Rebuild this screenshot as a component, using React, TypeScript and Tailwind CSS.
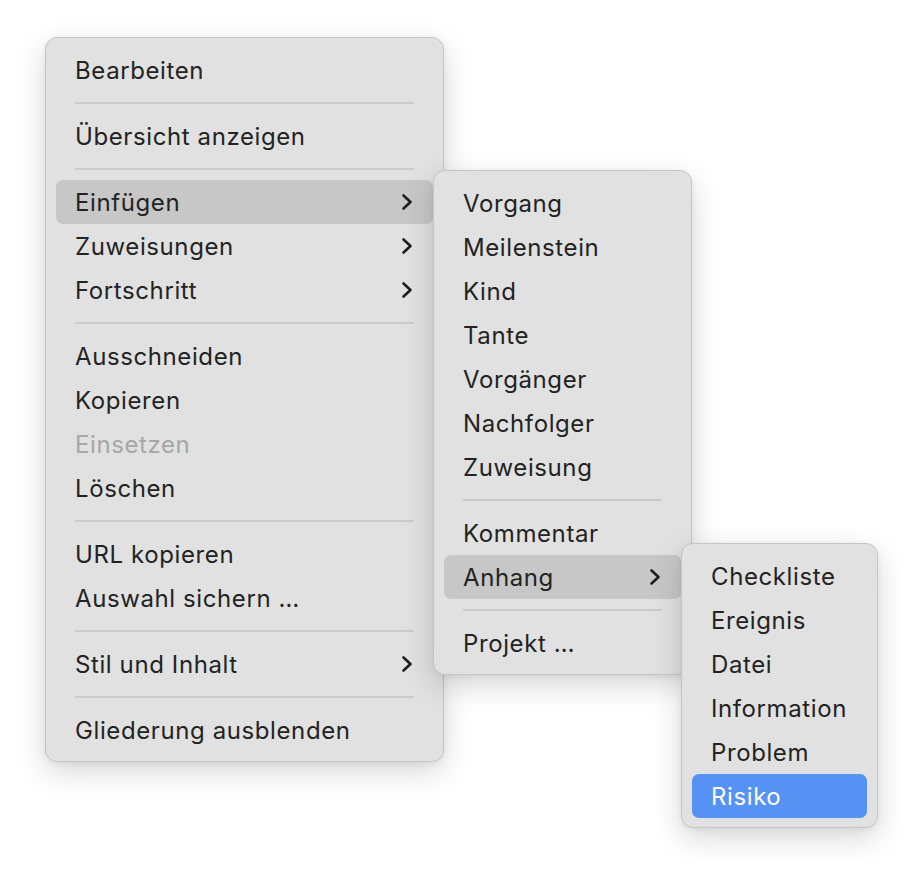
import React from "react";

type Entry =
  | { kind: "item"; label: string; sub?: boolean; state?: "hover" | "active" | "disabled" }
  | { kind: "sep" };

const Chevron = () => (
  <svg width="12" height="18" viewBox="0 0 12 18" fill="none" className="shrink-0">
    <polyline points="2.5,2.5 9.5,9 2.5,15.5" stroke="#1f1f1f" strokeWidth="2.6" strokeLinecap="round" strokeLinejoin="round" />
  </svg>
);

function Menu({ entries, className }: { entries: Entry[]; className: string }) {
  return (
    <div
      className={
        "absolute rounded-[12px] border border-[#c4c5c4] bg-[#e0e1e0] px-[10px] pt-[10px] pb-[9px] shadow-[0_10px_30px_rgba(0,0,0,0.16),0_2px_6px_rgba(0,0,0,0.06)] " +
        className
      }
    >
      {entries.map((e, i) => {
        if (e.kind === "sep") {
          return (
            <div key={i} className="flex h-[22px] items-center px-[19px]">
              <div className="h-[2px] w-full bg-[#c9cac9]" />
            </div>
          );
        }
        const bg =
          e.state === "hover" ? "bg-[#c6c7c6]" : e.state === "active" ? "bg-[#5592f4]" : "";
        const color =
          e.state === "active" ? "text-white" : e.state === "disabled" ? "text-[#a6a7a6]" : "text-[#232323]";
        return (
          <div
            key={i}
            className={"flex h-[44px] items-center justify-between rounded-[7px] pl-[19px] pr-[20px] " + bg}
          >
            <span className={"translate-y-[1px] whitespace-nowrap text-[24px] leading-none tracking-[0.6px] " + color}>
              {e.label}
            </span>
            {e.sub && <Chevron />}
          </div>
        );
      })}
    </div>
  );
}

const main: Entry[] = [
  { kind: "item", label: "Bearbeiten" },
  { kind: "sep" },
  { kind: "item", label: "Übersicht anzeigen" },
  { kind: "sep" },
  { kind: "item", label: "Einfügen", sub: true, state: "hover" },
  { kind: "item", label: "Zuweisungen", sub: true },
  { kind: "item", label: "Fortschritt", sub: true },
  { kind: "sep" },
  { kind: "item", label: "Ausschneiden" },
  { kind: "item", label: "Kopieren" },
  { kind: "item", label: "Einsetzen", state: "disabled" },
  { kind: "item", label: "Löschen" },
  { kind: "sep" },
  { kind: "item", label: "URL kopieren" },
  { kind: "item", label: "Auswahl sichern …" },
  { kind: "sep" },
  { kind: "item", label: "Stil und Inhalt", sub: true },
  { kind: "sep" },
  { kind: "item", label: "Gliederung ausblenden" },
];

const sub1: Entry[] = [
  { kind: "item", label: "Vorgang" },
  { kind: "item", label: "Meilenstein" },
  { kind: "item", label: "Kind" },
  { kind: "item", label: "Tante" },
  { kind: "item", label: "Vorgänger" },
  { kind: "item", label: "Nachfolger" },
  { kind: "item", label: "Zuweisung" },
  { kind: "sep" },
  { kind: "item", label: "Kommentar" },
  { kind: "item", label: "Anhang", sub: true, state: "hover" },
  { kind: "sep" },
  { kind: "item", label: "Projekt …" },
];

const sub2: Entry[] = [
  { kind: "item", label: "Checkliste" },
  { kind: "item", label: "Ereignis" },
  { kind: "item", label: "Datei" },
  { kind: "item", label: "Information" },
  { kind: "item", label: "Problem" },
  { kind: "item", label: "Risiko", state: "active" },
];

export default function App() {
  return (
    <div
      className="relative h-[882px] w-[924px] overflow-hidden bg-white"
      style={{ fontFamily: "Inter, 'Noto Sans', 'Liberation Sans', sans-serif" }}
    >
      <Menu entries={main} className="left-[45px] top-[37px] w-[399px]" />
      <Menu entries={sub1} className="left-[433px] top-[170px] w-[259px]" />
      <Menu entries={sub2} className="left-[681px] top-[543px] w-[197px]" />
    </div>
  );
}
